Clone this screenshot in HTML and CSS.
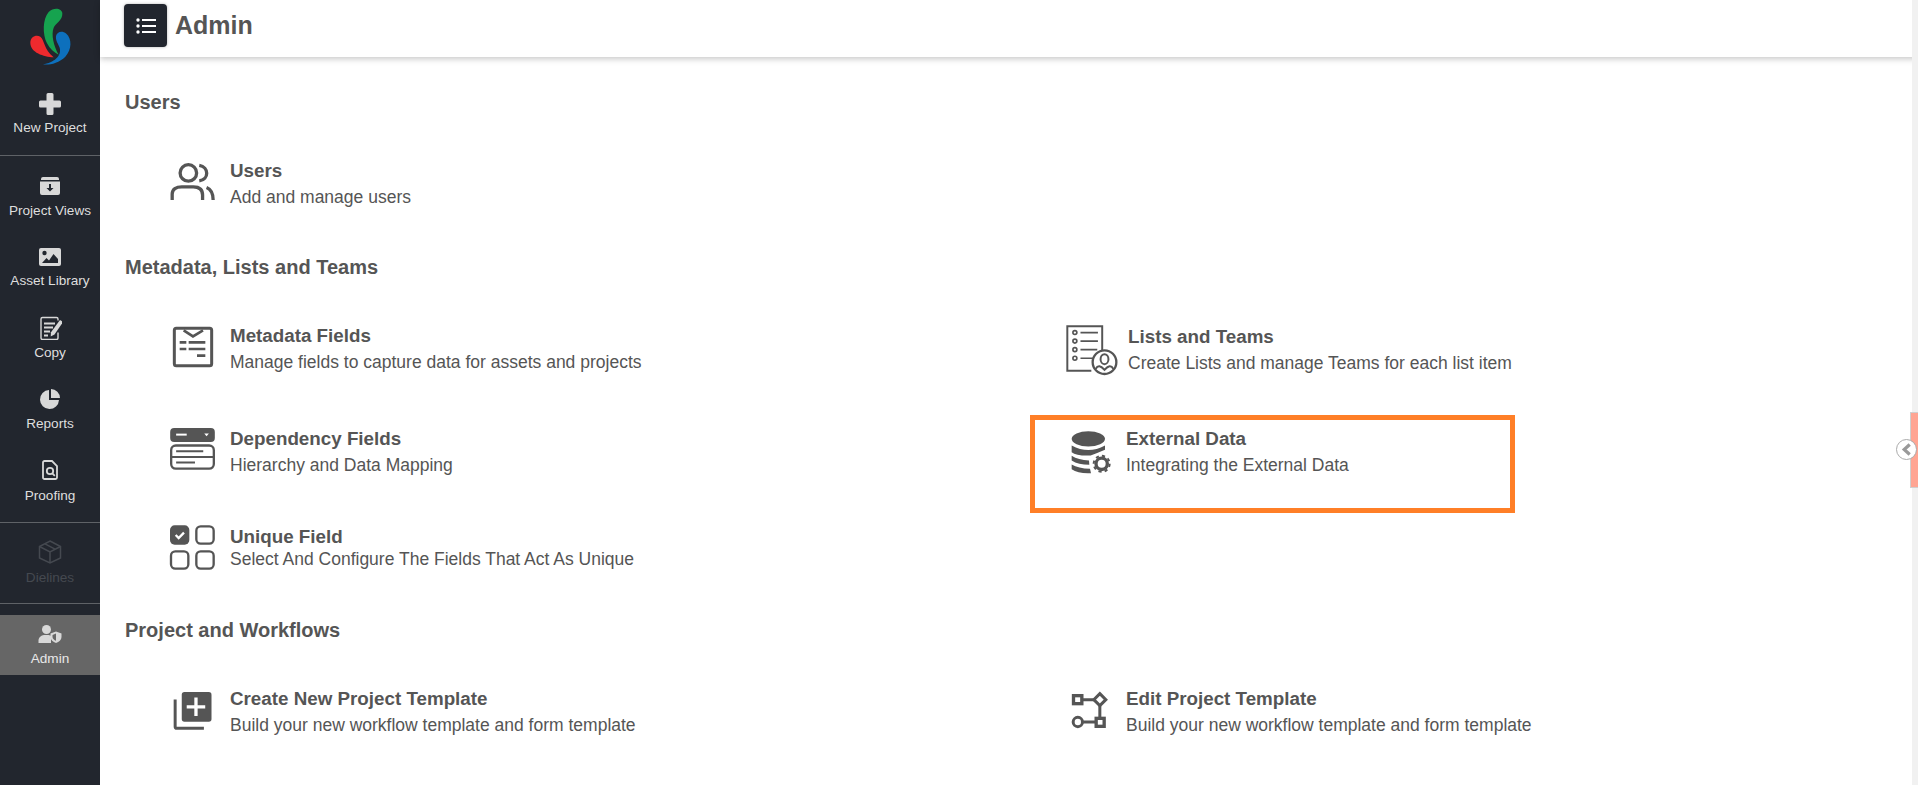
FILE: index.html
```html
<!DOCTYPE html>
<html lang="en">
<head>
<meta charset="utf-8">
<title>Admin</title>
<link rel="stylesheet" href="styles.css">
</head>
<body>
<div class="layout">
  <aside class="sidebar">
    <div class="logo">
      <svg viewBox="50 20 150 180" class="logo-svg">
        <path fill="#16a34f" d="M156 42C155 28 132 22 115 38C97 58 96 105 110 132C118 148 132 160 145 166C130 140 122 105 130 85C136 72 157 64 156 42Z"/>
        <path fill="#ee2a2e" d="M130 174C100 172 60 160 60 130C60 112 78 104 90 112C103 122 100 150 130 174Z"/>
        <path fill="#0d70bd" d="M98 195C130 190 155 170 148 145C145 135 135 125 137 110C140 97 155 92 168 103C185 118 185 150 165 172C145 192 115 198 98 195Z"/>
      </svg>
    </div>
    <div class="nav-group nav-group-top">
      <a class="nav-item nav-item-high">
        <svg class="nav-icon" viewBox="-1 -1 24 24"><path fill="#d8d8d8" d="M9 0h4a1.500 1.500 0 0 1 1.500 1.500V7.500h6A1.500 1.500 0 0 1 22 9v4a1.500 1.500 0 0 1-1.500 1.500h-6v6A1.500 1.500 0 0 1 13 22H9a1.500 1.500 0 0 1-1.500-1.500v-6h-6A1.500 1.500 0 0 1 0 13V9a1.500 1.500 0 0 1 1.500-1.500h6v-6A1.500 1.500 0 0 1 9 0Z"/></svg>
        <span>New Project</span>
      </a>
    </div>
    <div class="nav-group nav-group-main">
      <a class="nav-item">
        <svg class="nav-icon" viewBox="-2 -3 24 24"><path fill="#d8d8d8" d="M3 0h14a2 2 0 0 1 2 2v1H1V2a2 2 0 0 1 2-2ZM0 4.500h20V16a2 2 0 0 1-2 2H2a2 2 0 0 1-2-2Z"/><path fill="#22262e" d="M9 7h2v4h2.500L10 14.500 6.500 11H9Z"/></svg>
        <span>Project Views</span>
      </a>
      <a class="nav-item nav-item-high">
        <svg class="nav-icon" viewBox="-1 -3 24 24"><path fill="#d8d8d8" d="M2 0h18a2 2 0 0 1 2 2v14a2 2 0 0 1-2 2H2a2 2 0 0 1-2-2V2a2 2 0 0 1 2-2Z"/><circle cx="5.500" cy="5" r="2.200" fill="#22262e"/><path fill="#22262e" d="M3 15l4.500-5 2.500 2.500L14.500 6 19 11v4Z"/></svg>
        <span>Asset Library</span>
      </a>
      <a class="nav-item">
        <svg class="nav-icon" viewBox="-1 0 24 23"><path fill="none" stroke="#d8d8d8" stroke-width="1.400" d="M19 16v5.500a1.500 1.500 0 0 1-1.500 1.500h-14A1.500 1.500 0 0 1 2 21.500v-19A1.500 1.500 0 0 1 3.500 1h14A1.500 1.500 0 0 1 19 2.500V4"/><path stroke="#d8d8d8" stroke-width="1.800" d="M5 7h11M5 11h9M5 15h6M5 19h4"/><path fill="#d8d8d8" d="M21 3.500l3 2-8.500 12.500-3.800 2 .3-4.300Z"/></svg>
        <span>Copy</span>
      </a>
      <a class="nav-item">
        <svg class="nav-icon" viewBox="-2 -2 24 24"><path fill="#d8d8d8" d="M9 1A9.500 9.500 0 1 0 19 11H9ZM11 0v9h9A9 9 0 0 0 11 0Z"/></svg>
        <span>Reports</span>
      </a>
      <a class="nav-item nav-item-low">
        <svg class="nav-icon" viewBox="-4 -2 24 24"><path fill="none" stroke="#d8d8d8" stroke-width="1.800" d="M2.500 1H10l5 5v11.500a1.500 1.500 0 0 1-1.500 1.500h-11A1.500 1.500 0 0 1 1 17.500v-15A1.500 1.500 0 0 1 2.500 1Z"/><circle cx="8" cy="11" r="3.200" fill="none" stroke="#d8d8d8" stroke-width="1.800"/><path stroke="#d8d8d8" stroke-width="1.800" d="M10.300 13.300l2.500 2.500"/></svg>
        <span>Proofing</span>
      </a>
    </div>
    <div class="nav-group nav-group-dim">
      <a class="nav-item nav-item-dim nav-item-low">
        <svg class="nav-icon" viewBox="0 0 24 24" fill="none" stroke="#454950" stroke-width="1.500"><path d="M12 1l10.500 5.500v11.500L12 23 1.500 18V6.500Z"/><path d="M1.500 6.500L12 12l10.500-5.500M12 12v11M7 3.800l10.500 5.500"/></svg>
        <span>Dielines</span>
      </a>
    </div>
    <a class="nav-item nav-item-active">
      <svg class="nav-icon" viewBox="-.5 -3 24 24"><circle cx="8" cy="4.500" r="4.500" fill="#d8d8d8"/><path fill="#d8d8d8" d="M0 18v-2.500C0 12 3 10 7 10h2c1.500 0 2.500.3 3.500.8V18Z"/><path fill="#d8d8d8" d="M17.500 6.500l5.500 2v3.500c0 3-2.500 5-5.500 6-3-1-5.500-3-5.500-6V8.500Z"/><path fill="#666" d="M17.500 8.500v7.300c-1.700-.7-3.500-2-3.500-3.800V10Z"/></svg>
      <span>Admin</span>
    </a>
  </aside>

  <div class="main">
    <header class="topbar">
      <button class="menu-btn" type="button" aria-label="Menu">
        <svg viewBox="0 0 20 16" class="menu-svg"><circle cx="2" cy="2" r="1.700" fill="#fff"/><circle cx="2" cy="8" r="1.700" fill="#fff"/><circle cx="2" cy="14" r="1.700" fill="#fff"/><path stroke="#fff" stroke-width="2" d="M6 2h14M6 8h14M6 14h14"/></svg>
      </button>
      <h1 class="page-title">Admin</h1>
    </header>

    <div class="content">
      <section class="section section-users">
        <h2 class="section-title">Users</h2>
        <div class="grid">
          <div class="item">
            <div class="icon"><svg class="ic ic-users" viewBox="60 38 135 112" fill="none" stroke="#555" stroke-width="10"><circle cx="115" cy="68" r="25"/><path d="M148 45C178 50 178 88 148 92M66 150V132C66 118 78 110 95 110H130C147 110 158 118 158 135V150M170 112C185 118 190 132 190 150"/></svg></div>
            <div class="text"><h3>Users</h3><p>Add and manage users</p></div>
          </div>
        </div>
      </section>

      <section class="section section-meta">
        <h2 class="section-title">Metadata, Lists and Teams</h2>
        <div class="grid grid-meta">
          <div class="item">
            <div class="icon"><svg class="ic ic-meta" viewBox="68 532 120 120" fill="none" stroke="#555" stroke-width="8"><rect x="72" y="536" width="112" height="112" rx="6" stroke-width="9"/><path d="M100 542L128 560L158 542" /><path d="M88 578H108M115 578H165M88 598H108M115 598H165M140 618H165"/></svg></div>
            <div class="text"><h3>Metadata Fields</h3><p>Manage fields to capture data for assets and projects</p></div>
          </div>
          <div class="item">
            <div class="icon"><svg class="ic ic-lists" viewBox="138 45 158 150" fill="none" stroke="#555" stroke-width="6"><path d="M215 183H142V48H248V120"/><g stroke-width="5"><circle cx="165" cy="67" r="6"/><circle cx="165" cy="93" r="6"/><circle cx="165" cy="119" r="6"/><circle cx="165" cy="145" r="6"/><path d="M182 67H235M182 93H235M182 119H233M182 145H220"/></g><circle cx="255" cy="157" r="36" stroke-width="7"/><ellipse cx="255" cy="148" rx="12" ry="15"/><path d="M228 178C235 165 243 168 255 180C267 168 275 165 282 178"/></svg></div>
            <div class="text text-lists"><h3>Lists and Teams</h3><p>Create Lists and manage Teams for each list item</p></div>
          </div>
          <div class="item">
            <div class="icon"><svg class="ic ic-dep" viewBox="60 55 135 127"><rect x="60" y="55" width="135" height="42" rx="12" fill="#555"/><path stroke="#fff" stroke-width="6" d="M78 75H110"/><path fill="#fff" d="M163 72H177L170 80Z"/><g fill="none" stroke="#555"><rect x="63" y="108" width="129" height="70" rx="14" stroke-width="7"/><path stroke-width="6" d="M63 143H192M78 125H160M78 159H135"/></g></svg></div>
            <div class="text"><h3>Dependency Fields</h3><p>Hierarchy and Data Mapping</p></div>
          </div>
          <div class="item item-external">
            <div class="icon"><svg class="ic ic-ext" viewBox="153 362 120 128"><g fill="#555"><ellipse cx="205" cy="385" rx="50" ry="23"/><path d="M155 405Q205 432 255 405V418Q232 428 212 435Q170 437 155 425Z"/><path d="M155 436Q175 449 207 450L208 463Q175 463 155 450Z"/><path d="M155 462Q175 474 210 475L213 488Q175 490 155 476Z"/></g><g fill="none" stroke="#555"><circle cx="245" cy="460" r="17" stroke-width="10"/><circle cx="245" cy="460" r="24" stroke-width="6" stroke-dasharray="9.500 9.350"/></g></svg></div>
            <div class="text"><h3>External Data</h3><p>Integrating the External Data</p></div>
            <div class="highlight"></div>
          </div>
          <div class="item item-tight">
            <div class="icon"><svg class="ic ic-unique" viewBox="60 345 135 135"><rect x="60" y="346" width="58" height="58" rx="14" fill="#555"/><path fill="none" stroke="#fff" stroke-width="7" d="M77 375L86 384L102 368"/><g fill="none" stroke="#555" stroke-width="7"><rect x="139" y="349" width="52" height="52" rx="13"/><rect x="63" y="424" width="52" height="52" rx="13"/><rect x="139" y="424" width="52" height="52" rx="13"/></g></svg></div>
            <div class="text"><h3>Unique Field</h3><p>Select And Configure The Fields That Act As Unique</p></div>
          </div>
        </div>
      </section>

      <section class="section section-project">
        <h2 class="section-title">Project and Workflows</h2>
        <div class="grid">
          <div class="item">
            <div class="icon"><svg class="ic ic-create" viewBox="70 65 115 115"><rect x="95" y="65" width="90" height="90" rx="8" fill="#555"/><path stroke="#fff" stroke-width="10" d="M138 82V138M110 110H166"/><path fill="none" stroke="#555" stroke-width="9" d="M75 88V170Q75 175 80 175H162"/></svg></div>
            <div class="text"><h3>Create New Project Template</h3><p>Build your new workflow template and form template</p></div>
          </div>
          <div class="item">
            <div class="icon"><svg class="ic ic-edit" viewBox="92 65 110 108" fill="none" stroke="#555" stroke-width="9"><rect x="99" y="76" width="25" height="24" stroke-width="10"/><path d="M126 88H160M178 107V142M128 155H165"/><path d="M178 70L196 88L178 106L160 88Z"/><circle cx="112" cy="155" r="14"/><rect x="167" y="144" width="24" height="24" stroke-width="10"/></svg></div>
            <div class="text"><h3>Edit Project Template</h3><p>Build your new workflow template and form template</p></div>
          </div>
        </div>
      </section>
    </div>
  </div>

  <div class="scrollbar"><div class="scroll-thumb"></div></div>
  <div class="collapse-btn">
    <svg viewBox="0 0 12 14" class="collapse-svg"><path fill="none" stroke="#999" stroke-width="3.500" d="M9.500 1.500L3.500 7l6 5.500"/></svg>
  </div>
</div>
</body>
</html>
```

FILE: styles.css
```css
* { box-sizing: border-box; }
html, body { margin: 0; height: 100%; }
body { font-family: "Liberation Sans", Arial, sans-serif; color: #555; background: #fff; overflow: hidden; }
h1, h2, h3, p { margin: 0; }

.layout { display: flex; height: 785px; position: relative; overflow: hidden; }

.sidebar { width: 100px; flex: none; background: #22262e; display: flex; flex-direction: column; }
.logo { height: 92px; display: flex; justify-content: center; padding: 6px 0 0 3px; }
.logo-svg { width: 50px; height: 60px; }

.nav-group { display: flex; flex-direction: column; border-bottom: 1px solid #5f6267; }
.nav-group-top { padding-bottom: 18px; }
.nav-group-main { padding: 18px 0 19px; gap: 26px; }
.nav-group-dim { padding: 17px 0 18px; margin-bottom: 11px; }

.nav-item { display: flex; flex-direction: column; align-items: center; height: 45px; color: #dedede; font-size: 13.6px; line-height: 16px; }
.nav-item span { margin-top: 5px; }
.nav-item-low span { margin-top: 6px; }
.nav-item-high span { margin-top: 4px; }
.nav-icon { height: 24px; width: 24px; flex: none; }
.nav-item-dim { color: #454950; }
.nav-item-active { background: #666; height: 60px; padding-top: 7px; color: #e8e8e8; }

.main { flex: 1; min-width: 0; display: flex; flex-direction: column; }
.topbar { height: 57px; flex: none; display: flex; align-items: flex-start; gap: 8px; padding: 4px 0 0 24px; background: #fff; box-shadow: 0 2px 6px rgba(0,0,0,.22); }
.menu-btn { width: 43px; height: 43px; border: 0; border-radius: 4px; background: #22262e; padding: 0; display: flex; align-items: center; justify-content: center; box-shadow: 0 0 3px rgba(0,0,0,.3); }
.menu-svg { width: 20px; height: 16px; }
.page-title { font-size: 25px; line-height: 42px; font-weight: 700; color: #555; }

.content { padding: 34px 0 0 25px; }
.section-title { font-size: 20px; line-height: 22px; font-weight: 700; color: #555; }
.section-meta { margin-top: 48px; }
.section-project { margin-top: 49px; }
.grid { display: grid; grid-template-columns: 896px 1fr; margin-top: 46px; }
.grid-meta { grid-template-rows: 103px 98px auto; }

.item { display: flex; padding-left: 45px; position: relative; align-items: flex-start; }
.icon { width: 45px; flex: none; margin-right: 15px; }
.ic { display: block; overflow: visible; }
.ic-users { width: 45px; height: 37px; margin-top: 4px; }
.ic-meta { width: 40px; height: 40px; margin: 3px 0 0 3px; }
.ic-lists { width: 52px; height: 50px; margin-top: 1px; }
.ic-dep { width: 45px; height: 42px; margin-top: 1px; }
.ic-ext { width: 40px; height: 43px; margin: 4px 0 0 5px; }
.ic-unique { width: 45px; height: 45px; }
.ic-create { width: 39px; height: 38px; margin: 5px 0 0 3px; }
.ic-edit { width: 37px; height: 36px; margin: 5px 0 0 5px; }

.text h3 { font-size: 18.8px; line-height: 22px; font-weight: 700; color: #555; padding-top: 1px; }
.text p { font-size: 17.5px; line-height: 22px; margin-top: 4px; color: #555; }
.text-lists { margin-left: 2px; padding-top: 1px; }
.item-tight .text p { margin-top: 0; }

.highlight { position: absolute; left: 9px; top: -12px; width: 485px; height: 98px; border: 5px solid #ff7f27; pointer-events: none; }

.scrollbar { position: absolute; top: 0; right: 0; bottom: 0; width: 6px; background: #f1f1f1; }
.scroll-thumb { position: absolute; top: 412px; right: 0; width: 8px; height: 76px; background: #ffa593; border: 1px solid #cfcfcf; border-right: 0; }
.collapse-btn { position: absolute; left: 1896px; top: 439px; width: 21px; height: 21px; border-radius: 50%; background: #fff; border: 1px solid #aaa; display: flex; align-items: center; justify-content: center; }
.collapse-svg { width: 11px; height: 13px; }
```
